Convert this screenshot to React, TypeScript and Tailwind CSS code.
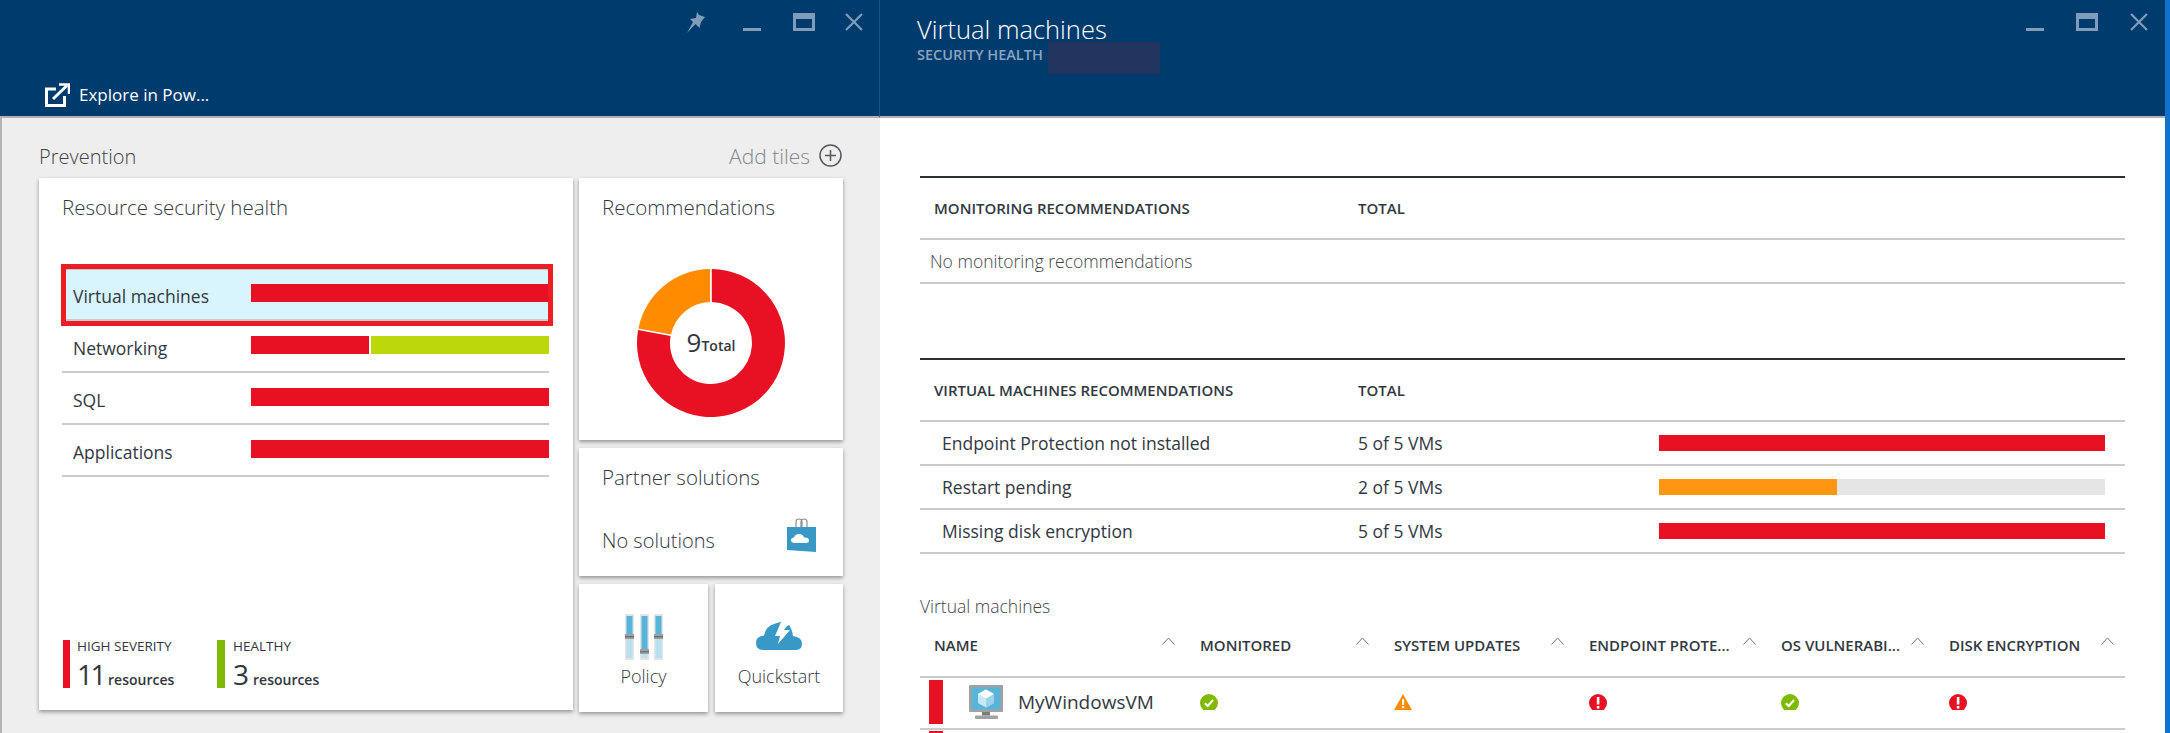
import React from "react";

const DARK = "text-[#32383f]";

function Minimize() {
  return <svg width="18" height="18" viewBox="0 0 18 18"><rect x="0" y="15" width="18" height="3" fill="#7f9db9" /></svg>;
}
function Maximize() {
  return (
    <svg width="22" height="18" viewBox="0 0 22 18">
      <path d="M0 0H22V18H0Z M3 6V15H19V6Z" fill="#7f9db9" fillRule="evenodd" />
    </svg>
  );
}
function Close() {
  return (
    <svg width="18" height="18" viewBox="0 0 18 18">
      <path d="M1 1L17 17M17 1L1 17" stroke="#7f9db9" strokeWidth="2.2" />
    </svg>
  );
}
function Pin() {
  return (
    <svg width="20" height="22" viewBox="0 0 20 22">
      <path d="M11 0L13 3L19 5L15 10L13.5 16L9.5 12L1 21L7 10L4 7L10 6Z" fill="#7f9db9" />
    </svg>
  );
}
function External() {
  return (
    <svg width="25" height="24" viewBox="0 0 25 24" fill="none" stroke="#fff">
      <path d="M11 6H1.5V22.5H19.5V13" strokeWidth="3" />
      <path d="M8 16L22 2.5" strokeWidth="3" />
      <path d="M14 1.5H24V11" strokeWidth="2.5" />
    </svg>
  );
}
function PlusCircle() {
  return (
    <svg width="23" height="23" viewBox="0 0 23 23" fill="none" stroke="#55595e" strokeWidth="1.5">
      <circle cx="11.5" cy="11.5" r="10.5" />
      <path d="M11.5 6V17M6 11.5H17" />
    </svg>
  );
}
function Donut() {
  return (
    <svg width="150" height="150" viewBox="-75 -75 150 150">
      <path
        d="M0.8 -74 A74 74 0 1 1 -72.9 -12.9 L-40.4 -7.1 A41 41 0 1 0 0.8 -41 Z"
        fill="#e81123"
      />
      <path d="M-1 -74 A74 74 0 0 0 -72.6 -14.6 L-40 -8.6 A41 41 0 0 1 -1 -41 Z" fill="#ff8c00" />
    </svg>
  );
}
function Bag() {
  return (
    <svg width="31" height="35" viewBox="0 0 31 35">
      <path d="M10 9V4Q10 1 13 1T16 4V9M15 9V4Q15 1 18 1T21 4V9" fill="none" stroke="#8a8f94" strokeWidth="1.2" />
      <path d="M1 9L30 9V34L1 32Z" fill="#3999c6" />
      <path d="M9 25Q5 25 5 22Q5 19.5 8 19.5Q9 16 13 16Q17 16 18 19.5Q23 19 23 22.5Q23 25 20 25Z" fill="#fff" />
    </svg>
  );
}
function Sliders() {
  const s = [
    { x: 0, h: 20 },
    { x: 15, h: 35 },
    { x: 29, h: 20 },
  ];
  return (
    <svg width="38" height="46" viewBox="0 0 38 46">
      {s.map((t) => (
        <g key={t.x}>
          <rect x={t.x} y="0" width="9" height="46" fill="#e4e4e4" />
          <rect x={t.x + 1.5} y="2" width="6" height="42" fill="#b9e0f0" />
          <rect x={t.x + 1.5} y="2" width={6} height={t.h} fill="#59b4d9" />
          <rect x={t.x} y={t.h} width="9" height="5" fill="#a0a1a2" />
          <rect x={t.x} y={t.h + 2} width="9" height="1.4" fill="#6f7072" />
        </g>
      ))}
    </svg>
  );
}
function Bolt() {
  return (
    <svg width="46" height="30" viewBox="0 0 46 30">
      <path d="M7 29Q0 29 0 22Q0 15 8 14.5Q10 5 18 3L25.5 0.5L24 9L33 4Q36 8 37 15Q46 16 46 23Q46 29 39 29Z" fill="#3999c6" />
      <path d="M25 1L19 15H24L22 23L34 9H28L32 3Z" fill="#fff" />
    </svg>
  );
}
function VmIcon() {
  return (
    <svg width="34" height="34" viewBox="0 0 34 34">
      <rect x="0" y="0" width="34" height="27" rx="1" fill="#a0a1a2" />
      <rect x="2.5" y="2.5" width="29" height="22" fill="#59b4d9" />
      <path d="M17 4.5L25 9V18L17 22.5L9 18V9Z" fill="#c8e8f5" />
      <path d="M17 4.5L25 9L17 13.5L9 9Z" fill="#fff" />
      <path d="M17 13.5V22.5L25 18V9Z" fill="#9ad3ea" />
      <rect x="13" y="27" width="8" height="3.5" fill="#7a7a7a" />
      <rect x="6" y="30.5" width="23" height="3.5" rx="1" fill="#a0a1a2" />
    </svg>
  );
}
function Ok() {
  return (
    <svg width="18" height="18" viewBox="0 0 18 18">
      <circle cx="9" cy="9" r="9" fill="#7fba00" />
      <path d="M4.8 9.2L7.8 12L13 6" fill="none" stroke="#fff" strokeWidth="2" />
    </svg>
  );
}
function Err() {
  return (
    <svg width="18" height="18" viewBox="0 0 18 18">
      <circle cx="9" cy="9" r="9" fill="#e81123" />
      <rect x="7.8" y="3" width="2.6" height="7.5" fill="#fff" />
      <rect x="7.8" y="12" width="2.6" height="2.6" fill="#fff" />
    </svg>
  );
}
function Warn() {
  return (
    <svg width="18" height="16" viewBox="0 0 18 16">
      <path d="M9 0L18 16H0Z" fill="#ff8c00" />
      <rect x="8" y="5" width="2.2" height="6" fill="#fff" />
      <rect x="8" y="12" width="2.2" height="2.2" fill="#fff" />
    </svg>
  );
}
function Chevron() {
  return (
    <svg width="13" height="8" viewBox="0 0 13 8" fill="none" stroke="#6d7176" strokeWidth="1">
      <path d="M0.5 7.5L6.5 1L12.5 7.5" />
    </svg>
  );
}

function Card({ className = "", children }: { className?: string; children: React.ReactNode }) {
  return <div className={"bg-white shadow-[0_2px_4px_rgba(0,0,0,0.38)] " + className}>{children}</div>;
}

function HealthRow({ label, children, selected }: { label: string; children: React.ReactNode; selected?: boolean }) {
  return (
    <div className={"flex h-[52px] border-b-2 border-[#cccccc] " + (selected ? "bg-[#d8f5fd] border-t border-t-[#c4c4c4]" : "")}>
      <div className={"w-[189px] pl-[11px] text-[17.5px] leading-[24px] " + (selected ? "pt-[14px] " : "pt-[15px] ") + DARK}>{label}</div>
      <div className={"flex-1 flex gap-[2px] " + (selected ? "pt-[14px]" : "pt-[15px]")}>{children}</div>
    </div>
  );
}

function Bar({ className }: { className: string }) {
  return <div className={"h-[18px] " + className} />;
}

function SectionHeader({ title }: { title: string }) {
  return (
    <div className={"flex h-[64px] items-center border-t-2 border-t-[#2d3036] border-b-2 border-b-[#cccccc] pl-[14px] text-[15px] font-semibold " + DARK}>
      <div className="w-[424px]">{title}</div>
      <div>TOTAL</div>
    </div>
  );
}

function RecRow({ name, total, fill, orange }: { name: string; total: string; fill: number; orange?: boolean }) {
  return (
    <div className={"flex h-[44px] items-center border-b-2 border-[#cccccc] pl-[22px] text-[17.5px] " + DARK}>
      <div className="w-[416px]">{name}</div>
      <div className="w-[301px]">{total}</div>
      <div className="w-[446px] h-[16px] bg-[#e5e5e5]">
        <div className={"h-full " + (orange ? "bg-[#ff9612]" : "bg-[#e81123]")} style={{ width: fill + "%" }} />
      </div>
    </div>
  );
}

const COLS = [
  { t: "NAME", w: "w-[266px]" },
  { t: "MONITORED", w: "w-[194px]" },
  { t: "SYSTEM UPDATES", w: "w-[195px]" },
  { t: "ENDPOINT PROTE...", w: "w-[192px]" },
  { t: "OS VULNERABI...", w: "w-[168px]" },
  { t: "DISK ENCRYPTION", w: "w-[190px]" },
];

export default function App() {
  return (
    <div className="w-[2170px] h-[733px] overflow-hidden flex font-['Open_Sans','Noto_Sans',sans-serif] bg-white">
      {/* Left blade */}
      <div className="w-[880px] flex flex-col">
        <div className="h-[118px] shrink-0 bg-[#003b6d] border-b-2 border-[#b0b0b0] flex flex-col justify-between border-r border-r-[#1d5283]">
          <div className="flex justify-end items-start pt-[13px] pr-[16px]">
            <div className="mt-[-1px] mr-[37px]"><Pin /></div>
            <div className="mr-[32px]"><Minimize /></div>
            <div className="mr-[30px]"><Maximize /></div>
            <Close />
          </div>
          <div className="flex items-center pl-[45px] pb-[9px] gap-[9px] text-white text-[17px] leading-[24px]">
            <External />
            <span>Explore in Pow...</span>
          </div>
        </div>
        <div className="flex-1 bg-[#eeeeee] border-l-2 border-[#b4b4b4] pl-[37px] pr-[37px]">
          <div className="flex justify-between h-[60px] pt-[26px] pr-[1px]">
            <span className="text-[20px] leading-[26px] text-[#3f444a] font-light">Prevention</span>
            <span className="flex items-start gap-[9px] text-[21px] leading-[24px] text-[#85888c] font-light">
              Add tiles <PlusCircle />
            </span>
          </div>
          <div className="flex gap-[6px]">
            <Card className="w-[534px] h-[532px] flex flex-col pl-[23px] pr-[24px]">
              <div className={"pt-[16px] text-[20.5px] leading-[26px] font-light " + DARK}>Resource security health</div>
              <div className="relative mt-[49px]">
                <HealthRow label="Virtual machines" selected><Bar className="w-full bg-[#e81123]" /></HealthRow>
                <HealthRow label="Networking">
                  <Bar className="w-[118px] bg-[#e81123]" />
                  <Bar className="flex-1 bg-[#bad80a]" />
                </HealthRow>
                <HealthRow label="SQL"><Bar className="w-full bg-[#e81123]" /></HealthRow>
                <HealthRow label="Applications"><Bar className="w-full bg-[#e81123]" /></HealthRow>
                <div className="absolute left-[-1px] right-[-4px] top-[-5px] h-[62px] border-[5px] border-[#ee1c25]" />
              </div>
              <div className="flex mt-auto mb-[22px] gap-[34px] pl-[1px]">
                <div className="flex gap-[7px] h-[48px]">
                  <div className="w-[7px] bg-[#e81123]" />
                  <div className="w-[106px]">
                    <div className={"text-[13.5px] leading-[14px] mt-[-1px] whitespace-nowrap " + DARK}>HIGH SEVERITY</div>
                    <div className={"flex items-baseline gap-[4px] mt-[5px] " + DARK}>
                      <span className="text-[28px] leading-[32px] tracking-[-2.5px]">11</span>
                      <span className="text-[14px] font-semibold">resources</span>
                    </div>
                  </div>
                </div>
                <div className="flex gap-[8px] h-[48px]">
                  <div className="w-[8px] bg-[#7fba00]" />
                  <div>
                    <div className={"text-[13.5px] leading-[14px] mt-[-1px] " + DARK}>HEALTHY</div>
                    <div className={"flex items-baseline gap-[4px] mt-[5px] " + DARK}>
                      <span className="text-[28px] leading-[32px]">3</span>
                      <span className="text-[14px] font-semibold">resources</span>
                    </div>
                  </div>
                </div>
              </div>
            </Card>
            <div className="w-[264px] flex flex-col gap-[8px]">
              <Card className="h-[262px] flex flex-col">
                <div className={"pl-[23px] pt-[16px] text-[20.5px] leading-[26px] font-light " + DARK}>Recommendations</div>
                <div className="relative flex justify-center mt-[48px]">
                  <Donut />
                  <div className={"absolute inset-0 flex items-center justify-center " + DARK}>
                    <span className="text-[26px] leading-none mt-[-2px]">9</span>
                    <span className="text-[14px] font-semibold mt-[4px]">Total</span>
                  </div>
                </div>
              </Card>
              <Card className="h-[128px] flex flex-col pl-[23px] pr-[26px]">
                <div className={"pt-[16px] text-[20.5px] leading-[26px] font-light " + DARK}>Partner solutions</div>
                <div className="flex justify-between items-start mt-[28px]">
                  <span className={"text-[20px] leading-[28px] font-light mt-[9px] " + DARK}>No solutions</span>
                  <Bag />
                </div>
              </Card>
              <div className="flex gap-[7px] h-[128px]">
                <Card className="w-[129px] flex flex-col items-center pt-[30px]">
                  <Sliders />
                  <div className={"mt-[4px] text-[18px] leading-[24px] font-light " + DARK}>Policy</div>
                </Card>
                <Card className="w-[128px] flex flex-col items-center pt-[37px]">
                  <Bolt />
                  <div className={"mt-[13px] text-[18px] leading-[24px] font-light " + DARK}>Quickstart</div>
                </Card>
              </div>
            </div>
          </div>
        </div>
      </div>

      {/* Right blade */}
      <div className="flex-1 flex flex-col min-w-0">
        <div className="h-[118px] shrink-0 bg-[#003b6d] border-b-2 border-[#b0b0b0] flex justify-between pl-[37px] pr-[17px]">
          <div className="pt-[12px]">
            <div className="text-[25.5px] leading-[34px] text-white font-light">Virtual machines</div>
            <div className="flex items-start">
              <span className="text-[14.5px] leading-[18px] font-semibold text-[#8aa5bf] w-[131px] whitespace-nowrap">SECURITY HEALTH</span>
              <div className="w-[112px] h-[32px] mt-[-4px] bg-[#22355f]" />
            </div>
          </div>
          <div className="flex items-start pt-[13px]">
            <div className="mr-[32px]"><Minimize /></div>
            <div className="mr-[32px]"><Maximize /></div>
            <Close />
          </div>
        </div>
        <div className="flex-1 min-h-0 overflow-hidden pl-[40px] pr-[40px] pt-[58px]">
          <SectionHeader title="MONITORING RECOMMENDATIONS" />
          <div className="h-[44px] flex items-center border-b-2 border-[#cccccc] pl-[10px] text-[17.5px] font-light text-[#3f444a]">
            No monitoring recommendations
          </div>
          <div className="h-[74px]" />
          <SectionHeader title="VIRTUAL MACHINES RECOMMENDATIONS" />
          <RecRow name="Endpoint Protection not installed" total="5 of 5 VMs" fill={100} />
          <RecRow name="Restart pending" total="2 of 5 VMs" fill={40} orange />
          <RecRow name="Missing disk encryption" total="5 of 5 VMs" fill={100} />
          <div className="pt-[41px] text-[17.5px] leading-[22px] font-light text-[#3f444a]">Virtual machines</div>
          <div className="flex h-[55px] mt-[6px] border-b-2 border-[#cccccc] items-center">
            {COLS.map((c) => (
              <div key={c.t} className={c.w + " flex justify-between items-start pl-[14px] pr-[11px] text-[15px] font-semibold mb-[9px] " + DARK}>
                <span className="whitespace-nowrap">{c.t}</span>
                <span className="mt-[3px]"><Chevron /></span>
              </div>
            ))}
          </div>
          <div className="flex h-[52px] border-b-2 border-[#cccccc]">
            <div className="w-[266px] flex items-start pl-[9px] pt-[2px]">
              <div className="w-[14px] h-[44px] bg-[#e81123]" />
              <div className="ml-[26px] mt-[5px]"><VmIcon /></div>
              <div className={"ml-[15px] mt-[10px] text-[19px] leading-[24px] " + DARK}>MyWindowsVM</div>
            </div>
            {[<Ok />, <Warn />, <Err />, <Ok />, <Err />].map((icon, i) => (
              <div key={i} className={COLS[i + 1].w + " pl-[14px] pt-[16px]"}>
                <div className="h-[16px] overflow-hidden">{icon}</div>
              </div>
            ))}
          </div>
          <div className="ml-[9px] mt-[1px] w-[14px] h-[10px] bg-[#e81123]" />
        </div>
      </div>
      <div className="w-[5px] bg-[#0f72cf]" />
    </div>
  );
}
